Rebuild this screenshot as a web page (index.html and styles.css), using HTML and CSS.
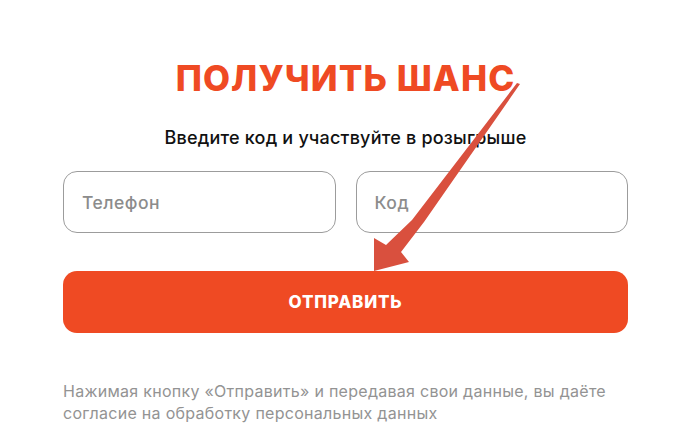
FILE: index.html
```html
<!DOCTYPE html>
<html lang="ru">
<head>
<meta charset="utf-8">
<link rel="stylesheet" href="styles.css">
</head>
<body>
<main class="form">
  <h1 class="title">ПОЛУЧИТЬ ШАНС</h1>
  <p class="subtitle">Введите код и участвуйте в розыгрыше</p>
  <div class="fields">
    <div class="field">Телефон</div>
    <div class="field">Код</div>
  </div>
  <button class="submit">ОТПРАВИТЬ</button>
  <p class="note">Нажимая кнопку «Отправить» и передавая свои данные, вы даёте согласие на обработку персональных данных</p>
</main>
<svg class="arrow" width="700" height="448" viewBox="0 0 700 448">
  <polygon points="517,83 520,84 424,222 401,252 409,262 374,271 374,238 386,245 412,220" fill="#d9503e"/>
</svg>
</body>
</html>
```
FILE: styles.css
```css
html, body {
  margin: 0;
  padding: 0;
  background: #ffffff;
}
body {
  width: 700px;
  height: 448px;
  overflow: hidden;
  position: relative;
  font-family: Inter, "Noto Sans", sans-serif;
}
.form {
  width: 565px;
  margin-left: 63px;
  padding-top: 58px;
  display: flex;
  flex-direction: column;
}
.title {
  margin: 0;
  text-align: center;
  color: #ef4a23;
  font-size: 35px;
  line-height: 40px;
  font-weight: 800;
  letter-spacing: 1.1px;
}
.subtitle {
  margin: 28px 0 0;
  text-align: center;
  color: #111111;
  font-size: 18px;
  line-height: 24px;
  font-weight: 500;
  letter-spacing: 0.2px;
}
.fields {
  margin-top: 21px;
  display: flex;
  gap: 20px;
}
.field {
  flex: 1;
  height: 62px;
  box-sizing: border-box;
  border: 1px solid #9c9c9c;
  border-radius: 14px;
  padding-left: 18px;
  display: flex;
  align-items: center;
  color: #8c8c8c;
  font-size: 17.5px;
  font-weight: 500;
  letter-spacing: 0.5px;
}
.submit {
  margin-top: 38px;
  height: 62px;
  border: none;
  border-radius: 14px;
  background: #ef4a23;
  color: #ffffff;
  font-family: inherit;
  font-size: 17px;
  font-weight: 800;
  letter-spacing: 0.8px;
  padding: 0;
}
.note {
  margin: 47px 0 0;
  color: #939393;
  font-size: 16px;
  line-height: 22px;
  font-weight: 400;
  letter-spacing: 0.28px;
}
.arrow {
  position: absolute;
  left: 0;
  top: 0;
  pointer-events: none;
}
```
